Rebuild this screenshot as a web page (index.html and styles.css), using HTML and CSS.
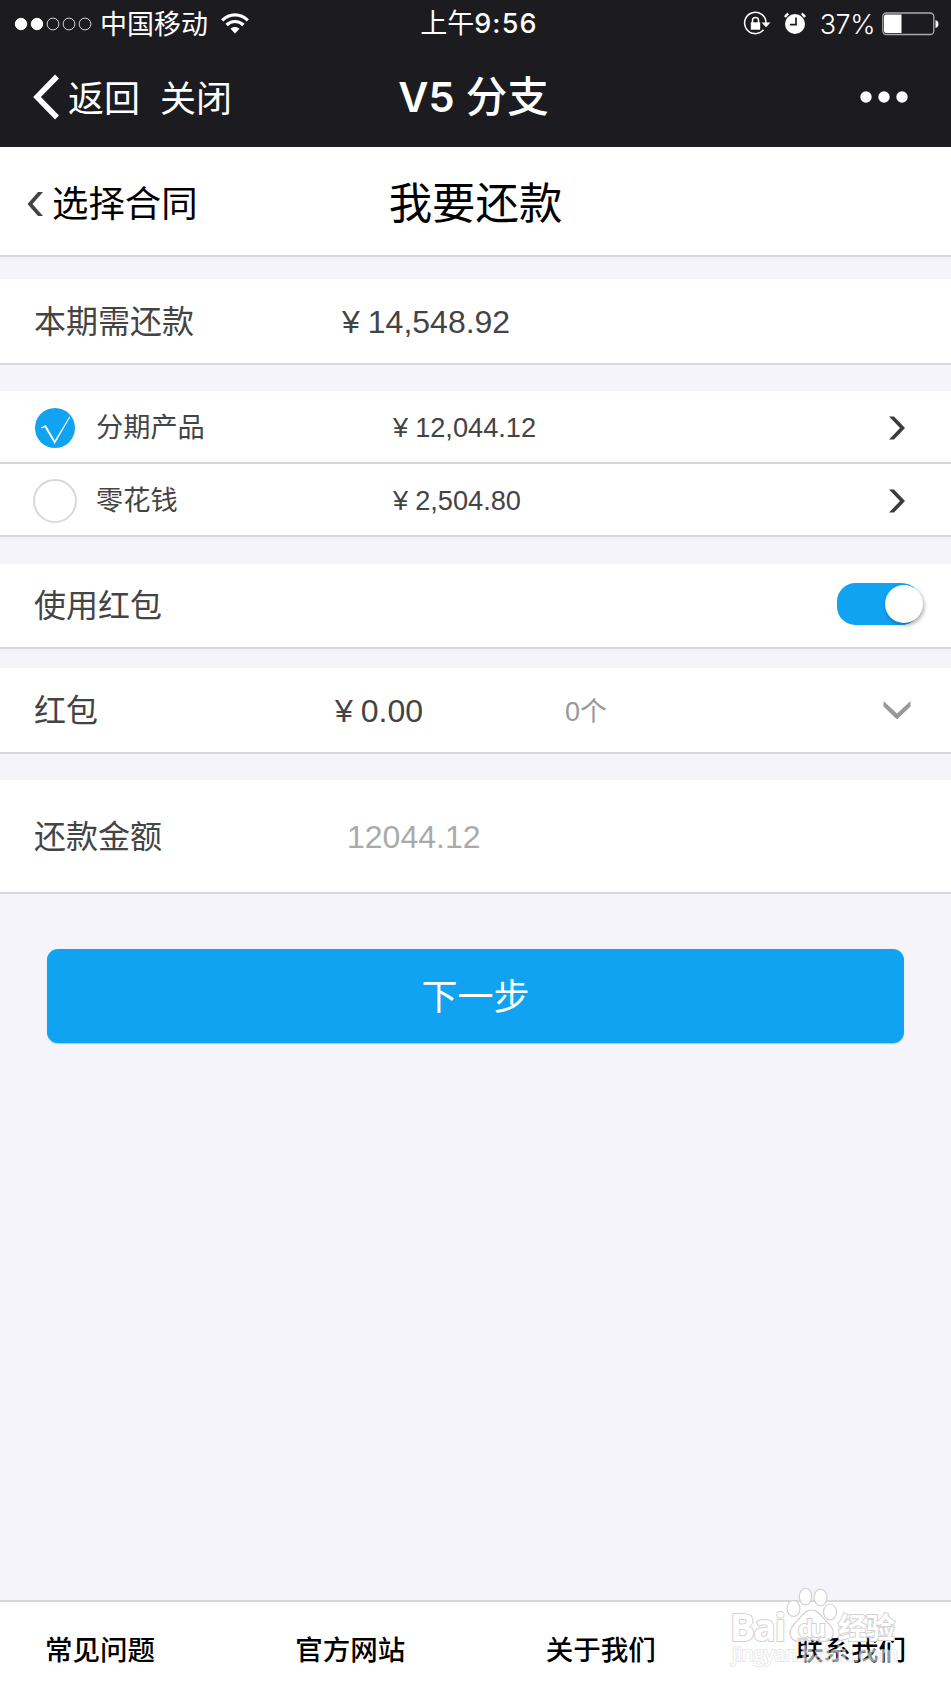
FILE: index.html
```
<!DOCTYPE html>
<html lang="zh-CN">
  <head>
    <meta charset="UTF-8" />
    <meta name="viewport" content="width=device-width, initial-scale=1.0" />
    <title>我要还款</title>
    <link rel="stylesheet" href="styles.css">
  </head>
  <body>
    <div class="page">
      <div class="topbar">
        <div class="status">
          <div class="status-left">
            <svg class="signal" width="78" height="14" viewBox="0 0 78 14" fill="#fff" stroke="#fff">
              <circle cx="7" cy="7" r="5.7" />
              <circle cx="23" cy="7" r="5.7" />
              <circle cx="39" cy="7" r="5.9" fill="none" stroke-width="0.8" />
              <circle cx="55" cy="7" r="5.9" fill="none" stroke-width="0.8" />
              <circle cx="71" cy="7" r="5.9" fill="none" stroke-width="0.8" />
            </svg>
            <span class="carrier">中国移动</span>
            <svg class="wifi" width="28" height="21" viewBox="0 0 28 21" fill="none" stroke="#fff" stroke-width="3.2">
              <path d="M1.2 7.4C8.5 0 19.500 0 26.800 7.400" />
              <path d="M5.600 12C10.300 7.300 17.700 7.300 22.400 12" />
              <path d="M9.500 15.800C12 13.300 16 13.300 18.500 15.800L14 20.500Z" fill="#fff" stroke="none" />
            </svg>
          </div>
          <div class="status-time">上午<span>9:56</span></div>
          <div class="status-right">
            <svg class="lock" width="28" height="26" viewBox="0 0 28 26" fill="none" stroke="#fff" stroke-width="1.5">
              <path d="M20.500 18.800A10.700 10.700 0 1 1 23 12" />
              <path d="M18.600 11.500H27.500L23 16.200Z" fill="#fff" stroke="none" />
              <rect x="7.800" y="11.300" width="9.400" height="7.400" fill="#fff" stroke="none" />
              <path d="M9.500 12V9.500C9.500 5.500 15.500 5.500 15.500 9.500V12" />
            </svg>
            <svg class="alarm" width="22" height="23" viewBox="0 0 22 23" fill="none" stroke="#fff">
              <circle cx="11" cy="12" r="10" fill="#fff" stroke="none" />
              <path d="M1 5A12 12 0 0 1 4.300 1.600M17.700 1.600A12 12 0 0 1 21 5" stroke-width="2.400" />
              <path d="M12 5.500V12.600H6" stroke="#1c1b20" stroke-width="1.700" />
            </svg>
            <span class="percent">37%</span>
            <svg class="battery" width="57" height="24" viewBox="0 0 57 24">
              <rect x="0.800" y="1" width="51" height="21.500" rx="3.500" fill="none" stroke="#aaa" stroke-width="1.300" />
              <path d="M4 2.500H19.500V21H4Q2 21 2 19V4.500Q2 2.500 4 2.500Z" fill="#fff" />
              <path d="M53.500 8Q56.500 9 56.500 12T53.500 16Z" fill="#fff" />
            </svg>
          </div>
        </div>
        <div class="nav">
          <div class="nav-left">
            <svg width="26" height="46" viewBox="0 0 26 46" fill="none" stroke="#fff" stroke-width="5.500">
              <path d="M24 2.500L4 23L24 43.500" />
            </svg>
            <span class="back">返回</span>
            <span class="close">关闭</span>
          </div>
          <div class="nav-title"><span>V5</span> 分支</div>
          <div class="nav-more">
            <svg width="50" height="12" viewBox="0 0 50 12" fill="#fff">
              <circle cx="7" cy="6" r="5.700" />
              <circle cx="25" cy="6" r="5.700" />
              <circle cx="43" cy="6" r="5.700" />
            </svg>
          </div>
        </div>
      </div>

      <div class="header">
        <div class="header-back">
          <svg width="16" height="26" viewBox="0 0 16 26" fill="#444">
            <path d="M11 1H16L5.500 13L16 25H11L0.500 13Z" />
          </svg>
          <span>选择合同</span>
        </div>
        <h1>我要还款</h1>
      </div>

      <div class="row total">
        <span class="label">本期需还款</span>
        <span class="money"><i>¥</i>14,548.92</span>
      </div>

      <div class="products">
        <div class="row product">
          <span class="radio">
            <svg width="40" height="40" viewBox="0 0 40 40">
              <circle cx="20" cy="20" r="20" fill="#10a3f2" />
              <path d="M6 19.500L10.800 17L19.800 32.500L34.500 8.500L35.200 9L19.700 36L9.700 19.300L6.400 20.500Z" fill="#fff" />
            </svg>
          </span>
          <span class="label">分期产品</span>
          <span class="money"><i>¥</i>12,044.12</span>
          <svg class="arrow" width="18" height="24" viewBox="0 0 18 24" fill="#3c3c3c">
            <path d="M1 0.500H6L17 12L6 23.500H1L12 12Z" />
          </svg>
        </div>
        <div class="row product">
          <span class="radio"><span class="radio-off"></span></span>
          <span class="label">零花钱</span>
          <span class="money"><i>¥</i>2,504.80</span>
          <svg class="arrow" width="18" height="24" viewBox="0 0 18 24" fill="#3c3c3c">
            <path d="M1 0.500H6L17 12L6 23.500H1L12 12Z" />
          </svg>
        </div>
      </div>

      <div class="row use-bonus">
        <span class="label">使用红包</span>
        <span class="switch"><span class="knob"></span></span>
      </div>

      <div class="row bonus">
        <span class="label">红包</span>
        <span class="money"><i>¥</i>0.00</span>
        <span class="count">0个</span>
        <svg class="arrow-down" width="28" height="20" viewBox="0 0 28 20" fill="#999">
          <path d="M0.500 1V6.500L14 19.500L27.500 6.500V1L14 13.500Z" />
        </svg>
      </div>

      <div class="row amount">
        <span class="label">还款金额</span>
        <span class="value">12044.12</span>
      </div>

      <button class="next-btn" type="button">下一步</button>

      <div class="footer">
        <a>常见问题</a>
        <a>官方网站</a>
        <a>关于我们</a>
        <a>联系我们</a>
        <svg class="watermark" width="180" height="92" viewBox="0 0 180 92">
          <g fill="#fff" stroke="#d2d2d4" stroke-width="1.200">
            <g fill-opacity="0.85">
              <ellipse cx="80.500" cy="12.500" rx="6.200" ry="8.300" />
              <ellipse cx="95.500" cy="13.500" rx="6.500" ry="8.300" />
              <ellipse cx="68.500" cy="24.500" rx="6.500" ry="8" />
              <ellipse cx="105" cy="28" rx="6.500" ry="8" />
              <path d="M86.500 26C94 26 97 34 103 39C111 46 110 57 99 57.500C93 57.500 92 56 86.500 56S79 57.500 74 57.500C63 57 63 46 70 39C76 34 79 26 86.500 26Z" />
            </g>
            <text class="wm-bai" x="5" y="56.500" textLength="56">Bai</text>
            <text class="wm-du" x="73" y="53" textLength="28">du</text>
            <text class="wm-cn" x="113" y="55" textLength="57">经验</text>
          </g>
          <text class="wm-url" x="7" y="77" textLength="166">jingyan.baidu.com</text>
        </svg>
      </div>
    </div>
  </body>
</html>
```
FILE: styles.css
```
* {
  box-sizing: border-box;
}

body {
  margin: 0;
  background-color: #f4f4fa;
  font-family: "Liberation Sans", "Noto Sans CJK SC", sans-serif;
  color: #444;
}

svg {
  display: block;
  flex: none;
}

.page {
  display: flex;
  flex-direction: column;
  height: 1689px;
}

/* top bar */
.topbar {
  height: 147px;
  background-color: #1c1b20;
  color: white;
}

.status,
.nav {
  display: grid;
  grid-template-columns: 1fr auto 1fr;
  align-items: center;
}

.status {
  height: 47px;
  padding: 0 12px 0 14px;
  font-size: 27px;
  line-height: 40px;
}

.status-left,
.status-right,
.nav-left {
  display: flex;
  align-items: center;
}

.carrier {
  margin-left: 8px;
  padding-top: 2px;
}

.wifi {
  margin-left: 13px;
}

.status-time {
  padding: 1px 0 0 5px;
  font-weight: 400;
  font-family: Inter, "Noto Sans CJK SC", sans-serif;
}

.status-time span {
  font-weight: 500;
  letter-spacing: 1.2px;
}

.status-right {
  justify-content: flex-end;
}

.alarm {
  margin-left: 13px;
}

.percent {
  margin: 2px 7px 0 14px;
  font-family: Inter, sans-serif;
  font-weight: 300;
  letter-spacing: -0.5px;
}

.nav {
  height: 100px;
  padding: 0 42px 0 33px;
  font-size: 36px;
  line-height: 50px;
}

.back,
.close {
  padding-top: 5px;
}

.back {
  margin-left: 9px;
}

.close {
  margin-left: 20px;
}

.nav-title {
  padding-left: 5px;
  font-family: Inter, "Noto Sans CJK SC", sans-serif;
  font-size: 41.5px;
  font-weight: 500;
}

.nav-title span {
  font-weight: 600;
}

.nav-more {
  justify-self: end;
}

/* page header */
.header {
  display: grid;
  grid-template-columns: 1fr auto 1fr;
  align-items: center;
  height: 110px;
  padding: 0 27px;
  background-color: white;
  border-bottom: 2px solid #d8d8da;
}

.header-back {
  display: flex;
  align-items: center;
  color: black;
  font-size: 36.4px;
}

.header-back svg {
  margin-top: 6px;
}

.header-back span {
  margin-left: 9px;
}

h1 {
  margin: 0;
  padding-bottom: 2px;
  color: black;
  font-size: 43.4px;
  font-weight: normal;
}

/* rows */
.row {
  display: flex;
  align-items: center;
  padding: 2px 0 0 34px;
  background-color: white;
  border-bottom: 2px solid #d8d8da;
  font-size: 32px;
  line-height: 46px;
}

.money i {
  font-style: normal;
  margin-right: 8px;
}

.total {
  height: 86px;
  margin-top: 22px;
}

.total .label {
  width: 308px;
}

.products {
  margin-top: 26px;
}

.product {
  height: 73px;
  padding-left: 33px;
  padding-right: 45px;
  font-size: 27.2px;
}

.radio {
  display: flex;
  justify-content: center;
  width: 44px;
}

.radio-off {
  width: 44px;
  height: 44px;
  border: 2px solid #d8d8d8;
  border-radius: 50%;
}

.product .label {
  width: 297px;
  margin-left: 19px;
}

.product .money i {
  margin-right: 7px;
}

.arrow {
  margin-left: auto;
}

.use-bonus {
  height: 85px;
  margin-top: 27px;
  padding-top: 0;
  padding-right: 29px;
}

.switch {
  display: flex;
  align-items: center;
  justify-content: flex-end;
  width: 85px;
  height: 42px;
  margin: 0 0 3px auto;
  background-color: #10a3f2;
  border-radius: 21px 24px 24px 21px;
}

.knob {
  width: 38px;
  height: 38px;
  margin-right: -1px;
  background-color: white;
  border-radius: 50%;
  box-shadow: 1px 2px 4px rgba(0, 0, 0, 0.35);
}

.bonus {
  height: 86px;
  margin-top: 19px;
  padding-right: 40px;
}

.bonus .label {
  width: 301px;
}

.bonus .money {
  width: 230px;
}

.count {
  padding-top: 1px;
  color: #999;
  font-size: 27px;
}

.arrow-down {
  margin: 0 0 3px auto;
}

.amount {
  height: 114px;
  margin-top: 26px;
}

.amount .label {
  width: 313px;
}

.value {
  color: #aaa;
}

.next-btn {
  height: 94px;
  margin: 55px 47px 0;
  padding: 0 0 5px;
  border: none;
  border-radius: 11px;
  background-color: #10a3f2;
  color: white;
  font-family: "Noto Sans CJK SC", sans-serif;
  font-size: 36px;
  box-shadow: 0 1px 1px #9ccdf0;
}

/* footer */
.footer {
  position: relative;
  display: flex;
  justify-content: space-between;
  align-items: center;
  height: 89px;
  margin-top: auto;
  padding: 4px 45px 0;
  background-color: white;
  border-top: 2px solid #d8d8da;
  color: black;
  font-size: 27.5px;
}

.footer a {
  font-family: "Noto Sans CJK SC", sans-serif;
  font-weight: 500;
}

.watermark {
  position: absolute;
  left: 725px;
  top: -18px;
}

.watermark text {
  paint-order: stroke;
  stroke-width: 2px;
  fill-opacity: 1;
}

.wm-bai,
.wm-du {
  font-family: "Open Sans", sans-serif;
  font-weight: bold;
  font-size: 37px;
}

.wm-du {
  font-size: 24px;
}

.wm-cn {
  font-family: "Noto Sans CJK SC", sans-serif;
  font-weight: bold;
  font-size: 29px;
}

.wm-url {
  font-family: "Open Sans", sans-serif;
  font-size: 20px;
  fill: #fff;
  stroke: #dcdcde;
  opacity: 0.6;
}
```
